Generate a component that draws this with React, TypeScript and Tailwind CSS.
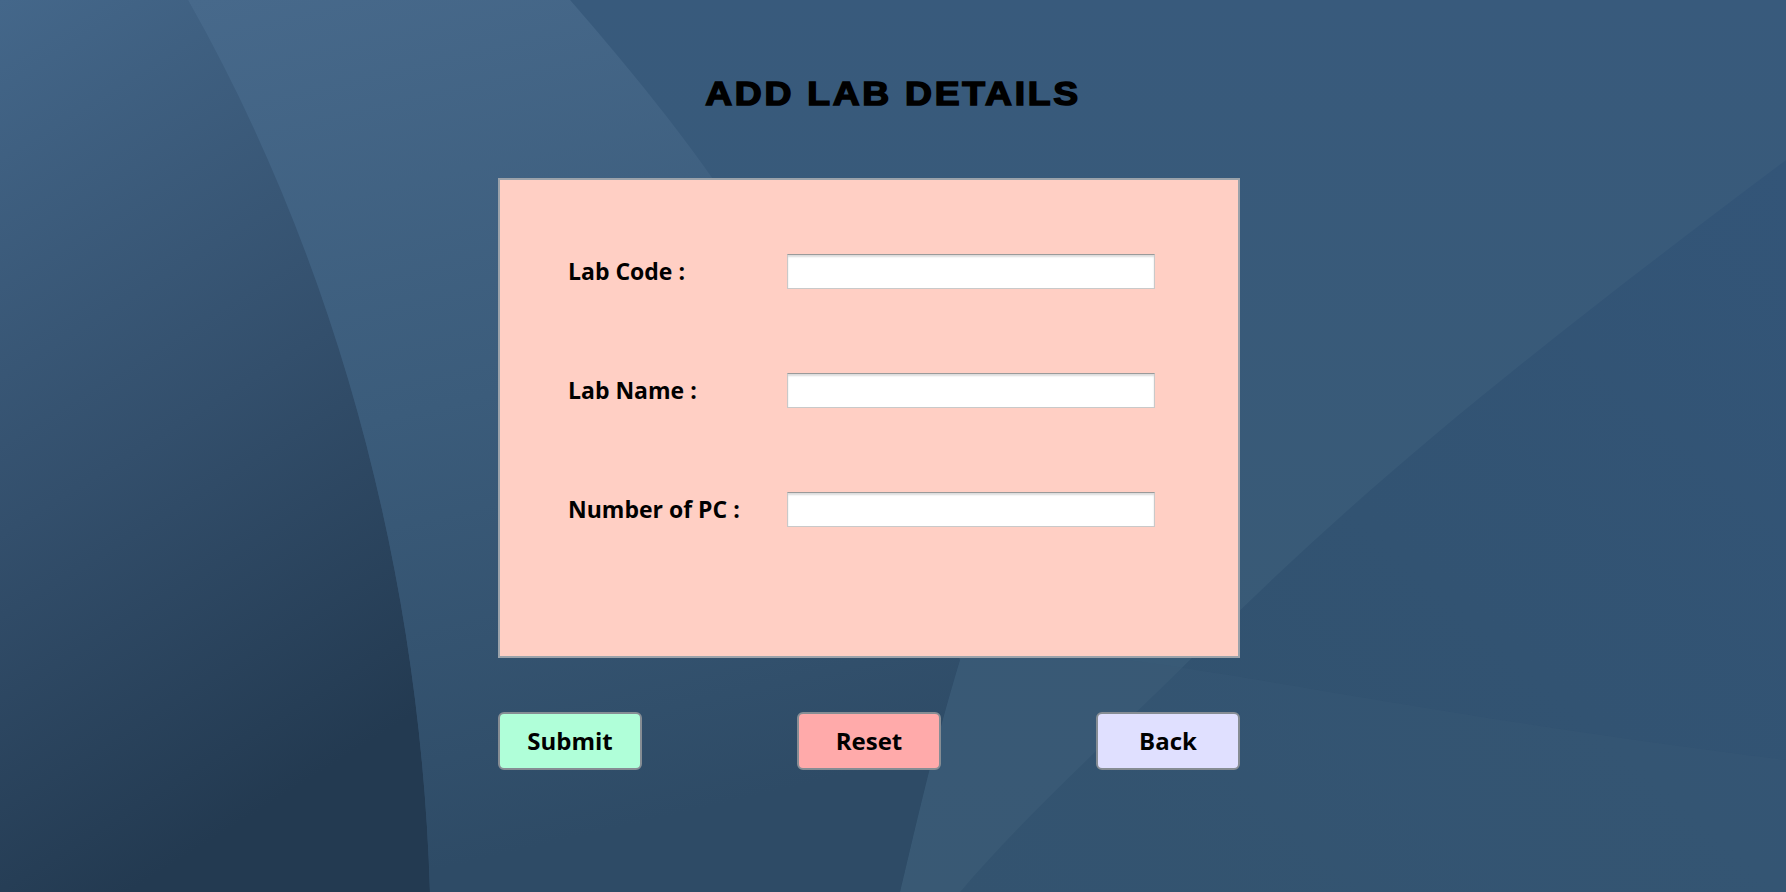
import React from "react";

const Wallpaper = () => (
  <svg
    className="absolute inset-0 h-full w-full"
    viewBox="0 0 1786 892"
    preserveAspectRatio="none"
  >
    <defs>
      <linearGradient id="base" x1="0" y1="0" x2="0" y2="1">
        <stop offset="0" stopColor="#3a5c7e" />
        <stop offset="1" stopColor="#2f4d69" />
      </linearGradient>
      <linearGradient id="mid" x1="0" y1="0" x2="0" y2="1">
        <stop offset="0" stopColor="#385a7c" />
        <stop offset="1" stopColor="#395a74" />
      </linearGradient>
      <linearGradient id="left" x1="0" y1="0" x2="0.3" y2="1">
        <stop offset="0" stopColor="#44678a" />
        <stop offset="0.55" stopColor="#334f6c" />
        <stop offset="1" stopColor="#233a51" />
      </linearGradient>
      <linearGradient id="band" x1="0" y1="0" x2="0.2" y2="1">
        <stop offset="0" stopColor="#47698b" />
        <stop offset="0.5" stopColor="#3b5c7b" />
        <stop offset="1" stopColor="#2e4b66" />
      </linearGradient>
      <linearGradient id="right" x1="1" y1="0" x2="0" y2="1">
        <stop offset="0" stopColor="#335578" />
        <stop offset="1" stopColor="#31516c" />
      </linearGradient>
    </defs>
    <rect width="1786" height="892" fill="url(#base)" />
    <path
      d="M570 0 C 700 150 820 300 960 660 C 930 760 915 830 900 892 L 1786 892 L 1786 0 Z"
      fill="url(#mid)"
    />
    <path d="M0 0 H188 C 330 250 420 560 430 892 H0 Z" fill="url(#left)" />
    <path
      d="M188 0 H570 C 700 150 820 300 960 660 C 930 760 915 830 900 892 H430 C 420 560 330 250 188 0 Z"
      fill="url(#band)"
    />
    <path
      d="M1786 160 C 1560 330 1380 470 1210 640 C 1120 730 1030 810 960 892 H1786 Z"
      fill="url(#right)"
    />
    <path
      d="M960 660 C 1080 630 1300 700 1786 760 V892 H900 C 915 830 930 760 960 660 Z"
      fill="#3a5a75"
      opacity="0.35"
    />
  </svg>
);

const fields = ["Lab Code :", "Lab Name :", "Number of PC :"];

const buttons = [
  { label: "Submit", color: "bg-[#b0ffd9]" },
  { label: "Reset", color: "bg-[#ffaaaa]" },
  { label: "Back", color: "bg-[#e0e0ff]" },
];

export default function App() {
  return (
    <div className="relative h-[892px] w-[1786px] overflow-hidden">
      <Wallpaper />
      <div className="relative flex flex-col pt-[77px]">
        <h1 className="scale-x-[1.13] text-center font-['Liberation_Sans',Arial,sans-serif] text-[33px] font-bold leading-[33px] tracking-[2.4px] text-black [-webkit-text-stroke:1.5px_black]">
          ADD LAB DETAILS
        </h1>

        <div className="ml-[498px] w-[742px]">
          <div className="mt-[68px] flex h-[480px] flex-col gap-[84px] border-2 border-[#9ba2aa] bg-[#ffcfc4] pt-[74px] pl-[68px]">
            {fields.map((f) => (
              <div key={f} className="flex items-center">
                <label className="w-[219px] font-['Open_Sans',sans-serif] text-[23px] font-bold text-black">
                  {f}
                </label>
                <input
                  type="text"
                  className="h-[35px] w-[368px] border border-[#c9c9c9] border-t-[#9a9a9a] bg-white shadow-[inset_0_2px_2px_rgba(0,0,0,0.14)] outline-none"
                />
              </div>
            ))}
          </div>

          <div className="mt-[54px] flex justify-between">
            {buttons.map((b) => (
              <button
                key={b.label}
                className={`h-[58px] w-[144px] rounded-[6px] border-2 border-[#868d94] ${b.color} font-['Open_Sans',sans-serif] text-[24px] font-bold text-black`}
              >
                {b.label}
              </button>
            ))}
          </div>
        </div>
      </div>
    </div>
  );
}
